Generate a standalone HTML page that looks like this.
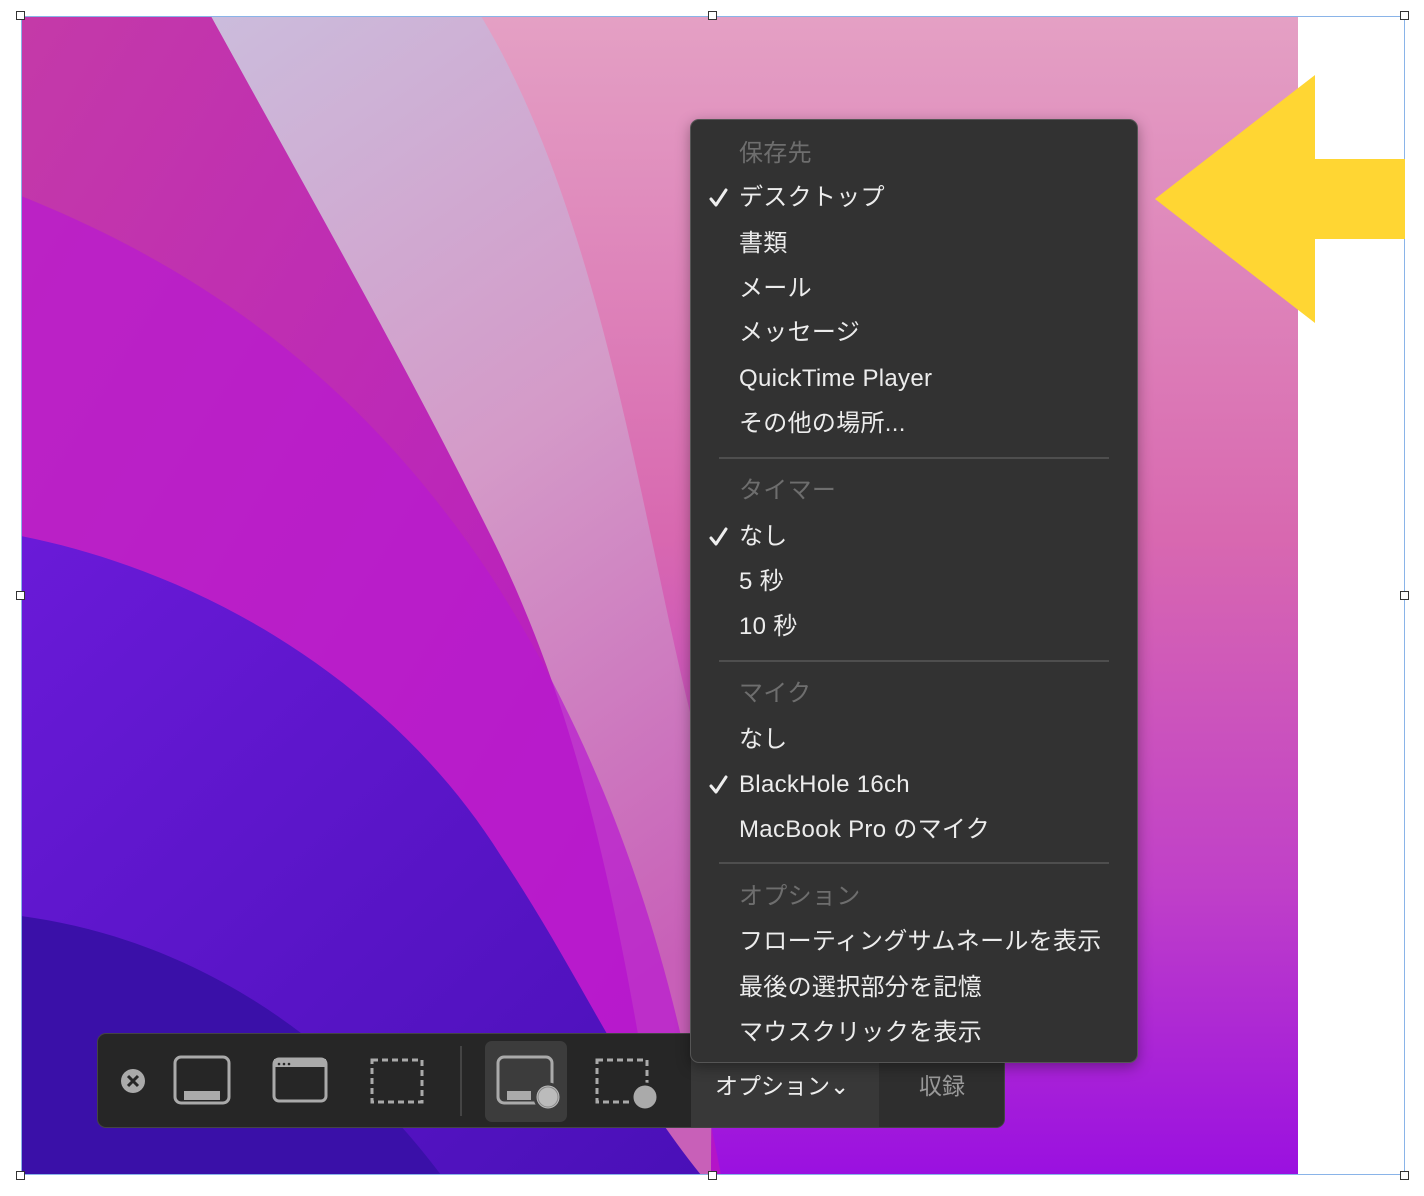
<!DOCTYPE html>
<html><head><meta charset="utf-8"><style>
body{margin:0;width:1424px;height:1196px;background:#fff;position:relative;overflow:hidden;font-family:"Liberation Sans","Noto Sans CJK JP",sans-serif}
.abs{position:absolute}
.menu{left:690px;top:119px;width:448px;height:944px;background:#323232;border-radius:9px;border:1px solid #555;box-sizing:border-box;box-shadow:0 4px 14px rgba(0,0,0,.35);z-index:5}
.it{position:absolute;left:48px;font-size:24px;color:#ececec;line-height:30px;white-space:nowrap;letter-spacing:0.3px}
.hd{color:#6e6e6e}
.ck{position:absolute;left:18px;width:20px;height:20px}
.sep{position:absolute;left:28px;right:28px;height:2px;background:#4e4e4e}
.tb{left:97px;top:1033px;width:908px;height:95px;background:#262626;border-radius:9px;border:1px solid #444;box-sizing:border-box;overflow:hidden;z-index:2}
.hnd{position:absolute;width:9px;height:9px;background:#fff;border:1px solid #333;box-sizing:border-box}
</style></head><body>
<svg class="abs" style="left:21px;top:16px" width="1277" height="1159" viewBox="0 0 1277 1159">
<defs>
<linearGradient id="g0" x1="0" y1="0" x2="1" y2="1"><stop offset="0" stop-color="#c43aa8"/><stop offset="1" stop-color="#b414c8"/></linearGradient>
<linearGradient id="g1" x1="0" y1="0" x2="0.3" y2="1"><stop offset="0" stop-color="#cbbcdc"/><stop offset="0.5" stop-color="#d49ac8"/><stop offset="1" stop-color="#c860b8"/></linearGradient>
<linearGradient id="g2" x1="0" y1="0" x2="0" y2="1"><stop offset="0" stop-color="#e4a0c4"/><stop offset="0.45" stop-color="#d868b0"/><stop offset="0.75" stop-color="#c040c8"/><stop offset="1" stop-color="#9a10e0"/></linearGradient>
<linearGradient id="g3" x1="0" y1="0" x2="1" y2="1"><stop offset="0" stop-color="#6a1ad8"/><stop offset="1" stop-color="#4a10b8"/></linearGradient>
</defs>
<rect width="1277" height="1159" fill="url(#g2)"/>
<path d="M0 0 L190 0 C300 200 420 400 520 600 C600 760 650 900 700 1159 L0 1159Z" fill="url(#g0)"/>
<path d="M190 0 L460 0 C580 200 620 500 670 700 C700 850 690 1000 690 1159 L640 1159 C600 900 560 700 470 520 C380 340 300 200 190 0Z" fill="url(#g1)"/>
<path d="M0 180 C200 260 350 380 470 560 C560 700 620 850 660 1020 L0 1020Z" fill="#b81ad0" opacity=".7"/>
<path d="M0 520 C200 560 380 680 480 840 C560 960 600 1060 680 1159 L0 1159Z" fill="url(#g3)"/>
<path d="M0 900 C150 920 300 1000 420 1159 L0 1159Z" fill="#3a10a8"/>
</svg>
<div class="abs" style="left:21px;top:16px;width:1384px;height:1159px;border:1px solid #8ab4e8;box-sizing:border-box"></div>
<div class="hnd" style="left:16px;top:11px"></div><div class="hnd" style="left:708px;top:11px"></div><div class="hnd" style="left:1400px;top:11px"></div>
<div class="hnd" style="left:16px;top:591px"></div><div class="hnd" style="left:1400px;top:591px"></div>
<div class="hnd" style="left:16px;top:1171px"></div><div class="hnd" style="left:708px;top:1171px"></div><div class="hnd" style="left:1400px;top:1171px"></div>
<svg class="abs" style="left:1150px;top:70px" width="260" height="260"><path d="M5 129 L165 5 L165 89 L255 89 L255 169 L165 169 L165 253Z" fill="#ffd633"/></svg>

<div class="abs menu">
<div class="it hd" style="top:19px">保存先</div>
<svg class="ck" style="top:68px" viewBox="0 0 20 20"><path d="M2 11 L7 17 L17 2" fill="none" stroke="#eee" stroke-width="3" stroke-linecap="round" stroke-linejoin="round"/></svg><div class="it" style="top:63px">デスクトップ</div>
<div class="it" style="top:109px">書類</div>
<div class="it" style="top:154px">メール</div>
<div class="it" style="top:198px">メッセージ</div>
<div class="it" style="top:244px">QuickTime Player</div>
<div class="it" style="top:289px">その他の場所...</div>
<div class="sep" style="top:337px"></div>
<div class="it hd" style="top:356px">タイマー</div>
<svg class="ck" style="top:407px" viewBox="0 0 20 20"><path d="M2 11 L7 17 L17 2" fill="none" stroke="#eee" stroke-width="3" stroke-linecap="round" stroke-linejoin="round"/></svg><div class="it" style="top:402px">なし</div>
<div class="it" style="top:447px">5 秒</div>
<div class="it" style="top:492px">10 秒</div>
<div class="sep" style="top:540px"></div>
<div class="it hd" style="top:559px">マイク</div>
<div class="it" style="top:605px">なし</div>
<svg class="ck" style="top:655px" viewBox="0 0 20 20"><path d="M2 11 L7 17 L17 2" fill="none" stroke="#eee" stroke-width="3" stroke-linecap="round" stroke-linejoin="round"/></svg><div class="it" style="top:650px">BlackHole 16ch</div>
<div class="it" style="top:695px">MacBook Pro のマイク</div>
<div class="sep" style="top:742px"></div>
<div class="it hd" style="top:762px">オプション</div>
<div class="it" style="top:807px">フローティングサムネールを表示</div>
<div class="it" style="top:853px">最後の選択部分を記憶</div>
<div class="it" style="top:898px">マウスクリックを表示</div>
</div>

<div class="abs tb">
<svg class="abs" style="left:0;top:0" width="908" height="95">
<circle cx="35" cy="47" r="12" fill="#aaa"/><path d="M30 42 L40 52 M40 42 L30 52" stroke="#262626" stroke-width="3"/>
<rect x="77" y="23" width="54" height="46" rx="6" fill="none" stroke="#aaa" stroke-width="3"/><rect x="86" y="57" width="36" height="9" fill="#aaa"/>
<rect x="176" y="25" width="52" height="42" rx="5" fill="none" stroke="#aaa" stroke-width="3"/><rect x="176" y="25" width="52" height="8" fill="#aaa"/><circle cx="181" cy="30" r="1.3" fill="#262626"/><circle cx="186" cy="30" r="1.3" fill="#262626"/><circle cx="191" cy="30" r="1.3" fill="#262626"/>
<rect x="274" y="26" width="50" height="42" fill="none" stroke="#aaa" stroke-width="3" stroke-dasharray="6 4"/>
<rect x="362" y="12" width="2" height="70" fill="#444"/>
<rect x="387" y="7" width="82" height="81" rx="7" fill="#3c3c3c"/>
<rect x="400" y="23" width="54" height="46" rx="6" fill="none" stroke="#aaa" stroke-width="3"/><rect x="409" y="57" width="24" height="9" fill="#aaa"/>
<circle cx="450" cy="63" r="13" fill="#bbb" stroke="#3c3c3c" stroke-width="3"/><circle cx="450" cy="63" r="10" fill="#bbb" stroke="#888" stroke-width="1"/>
<rect x="499" y="26" width="50" height="42" fill="none" stroke="#aaa" stroke-width="3" stroke-dasharray="6 4"/>
<circle cx="547" cy="63" r="13" fill="#aaa" stroke="#262626" stroke-width="3"/>
<rect x="593" y="0" width="188" height="95" fill="#383838"/>
<rect x="781" y="0" width="127" height="95" fill="#2e2e2e"/>
</svg>
<div class="abs" style="left:617px;top:33px;font-size:23px;color:#eee">オプション⌄</div>
<div class="abs" style="left:821px;top:33px;font-size:23px;color:#999">収録</div>
</div>
</body></html>
